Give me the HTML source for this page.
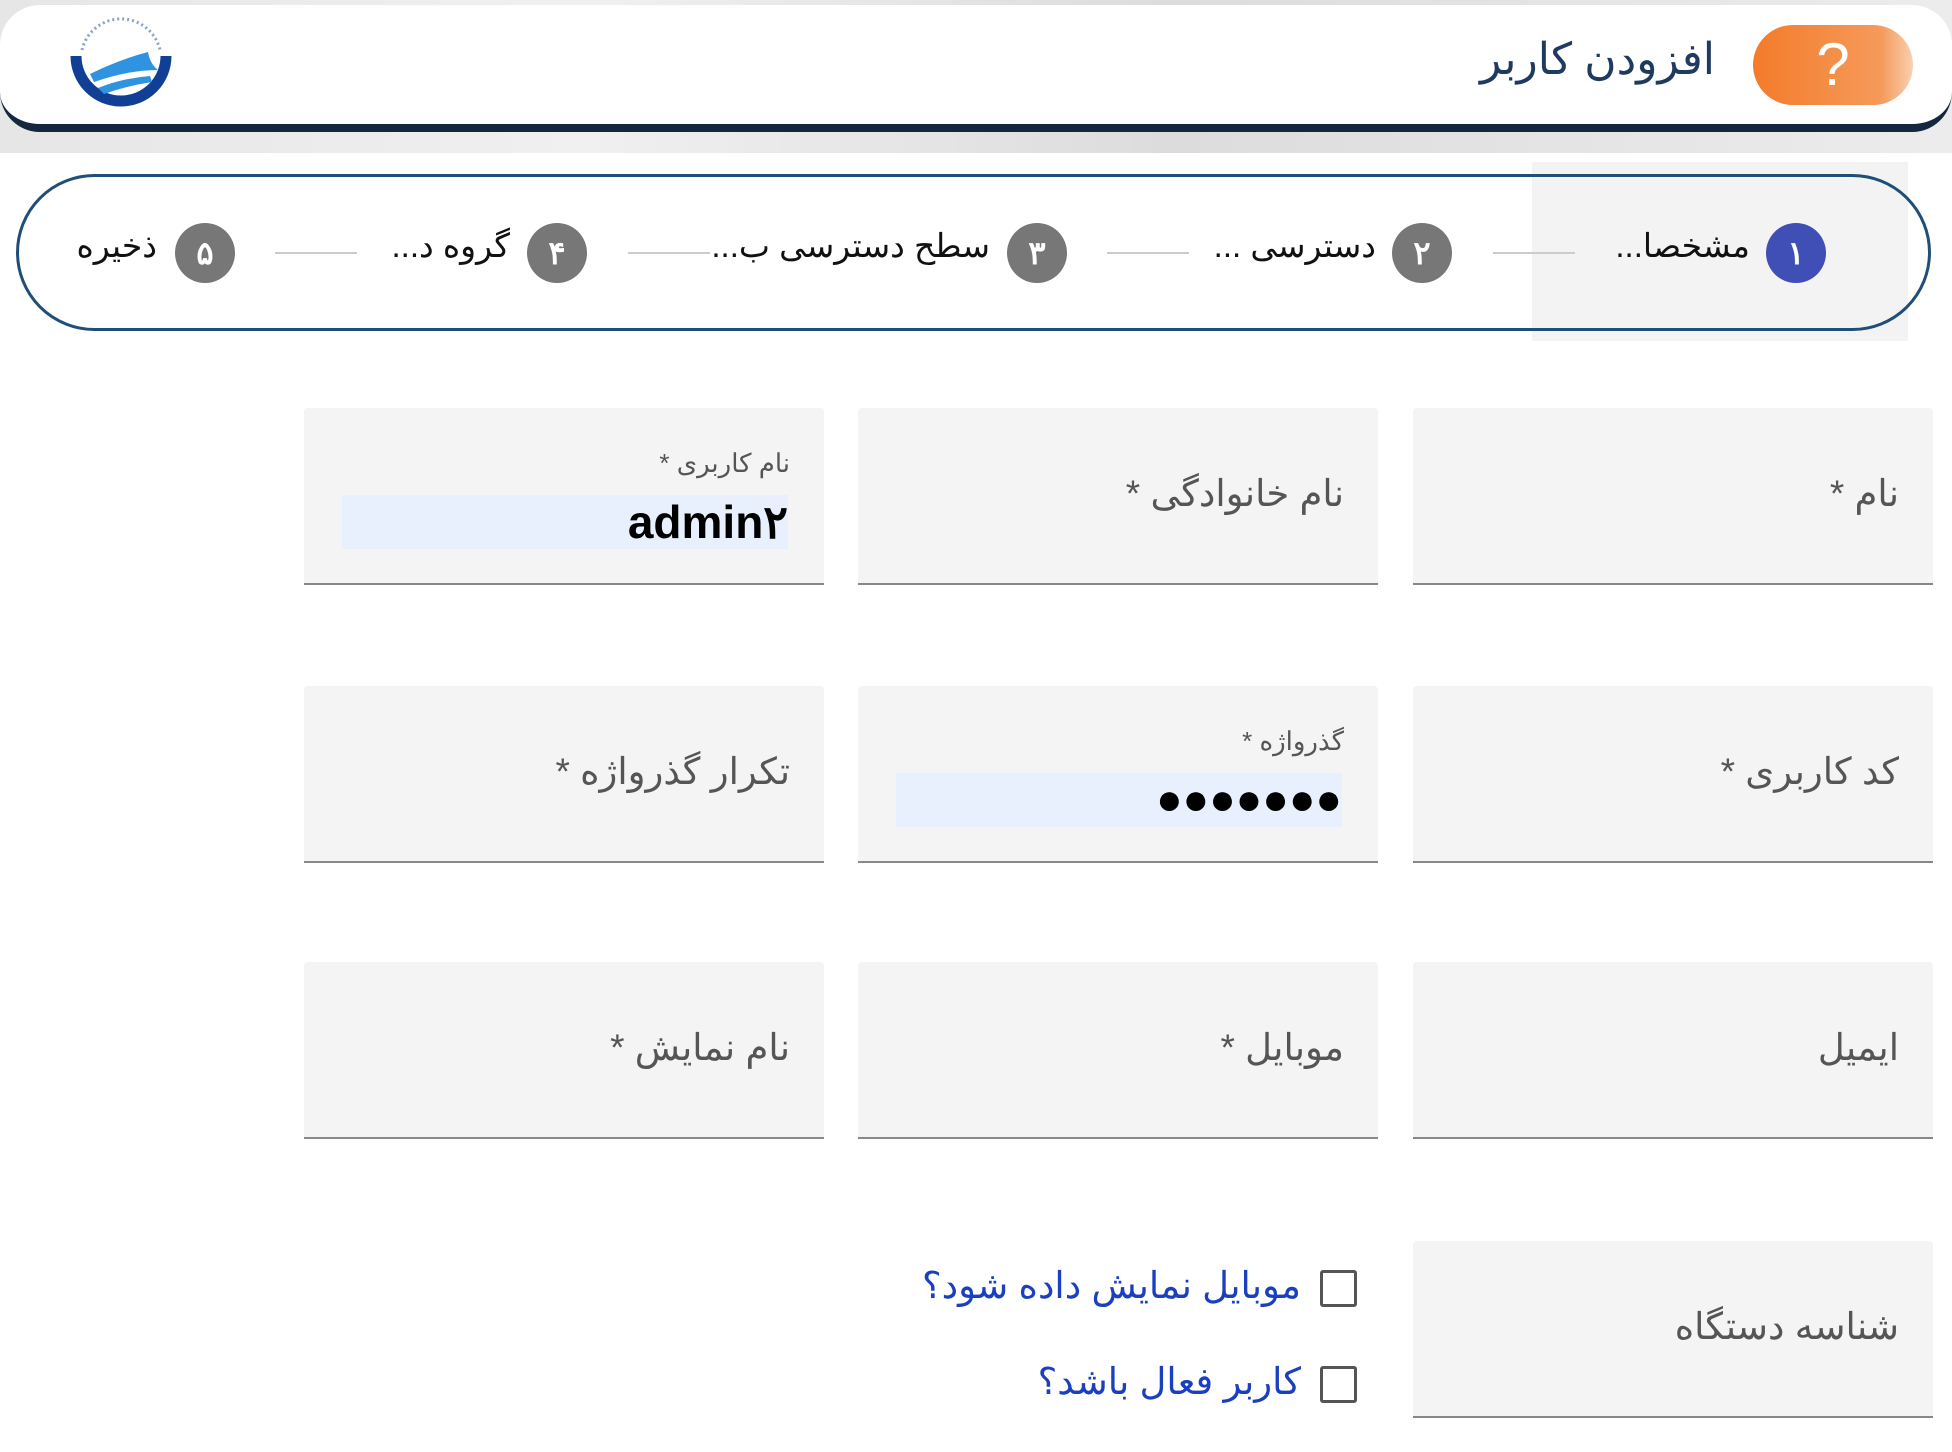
<!DOCTYPE html>
<html><head><meta charset="utf-8"><style>
*{box-sizing:border-box;margin:0;padding:0}
body{width:1952px;height:1452px;background:#fff;font-family:"Liberation Sans","Noto Sans CJK SC",sans-serif;position:relative;overflow:hidden}
.abs{position:absolute}
.band{left:0;top:0;width:1952px;height:153px;background:linear-gradient(90deg,#e6e6e6,#f0f0f0 30%,#dcdcdc 60%,#ececec)}
.hdr{left:0;top:5px;width:1952px;height:127px;background:#fff;border-radius:0 0 40px 40px;border-bottom:8px solid #14273f;border-top-left-radius:40px;border-top-right-radius:40px}
.help{left:1753px;top:25px;width:160px;height:80px;border-radius:40px;background:linear-gradient(90deg,#f47b2a,#f59a5a 80%,#f8d0b0);color:#fff;font-size:60px;text-align:center;line-height:80px}
.title{right:237px;top:34px;font-size:44px;color:#1e3a5f;direction:rtl}
.step{left:16px;top:174px;width:1915px;height:157px;border:3px solid #1f4e79;border-radius:80px}
.hl{left:1532px;top:162px;width:376px;height:179px;background:#f3f3f3}
.c{position:absolute;width:60px;height:60px;border-radius:50%;background:#777;color:#fff;font-size:32px;font-weight:bold;text-align:center;line-height:60px;top:223px}
.st{position:absolute;top:226px;font-size:33px;color:#111;direction:rtl;white-space:nowrap}
.ln{position:absolute;top:252px;height:2px;background:#ccc;width:82px}
.f{position:absolute;width:520px;height:177px;background:#f4f4f4;border-bottom:2px solid #888;border-radius:4px 4px 0 0}
.lb{position:absolute;right:34px;top:64px;font-size:37px;color:#555;direction:rtl;white-space:nowrap}
.sl{position:absolute;right:34px;top:40px;font-size:26px;color:#555;direction:rtl}
.inp{position:absolute;right:36px;top:87px;width:446px;height:54px;background:#e8f0fe;font-size:46px;font-weight:bold;text-align:right;line-height:54px;color:#000}
.cb{position:absolute;left:1320px;width:37px;height:37px;border:3px solid #555;border-radius:3px}
.ct{position:absolute;right:651px;font-size:37px;color:#1a3fbf;direction:rtl;white-space:nowrap}
</style></head><body>
<div class="abs band"></div>
<div class="abs hdr"></div>
<svg class="abs" style="left:68px;top:12px" width="106" height="100" viewBox="0 0 106 100">
<path d="M8 44 A45 45 0 1 0 98 44" fill="none" stroke="#123f96" stroke-width="11"/>
<path d="M14 38 A40 40 0 0 1 92 38" fill="none" stroke="#8aa0c8" stroke-width="3" stroke-dasharray="2 3"/>
<path d="M22 62 Q50 48 80 40 Q82 52 90 58 Q60 58 26 70Z" fill="#2e93e0"/>
<path d="M30 76 Q55 66 82 64 L84 70 Q58 74 36 82Z" fill="#2e93e0"/>
</svg>
<div class="abs help">?</div>
<div class="abs title">افزودن کاربر</div>
<div class="abs hl"></div>
<div class="abs step"></div>
<div class="c" style="left:1766px;background:#3f4fb5">۱</div>
<div class="st" style="right:202px">مشخصا...</div>
<div class="ln" style="left:1493px"></div>
<div class="c" style="left:1392px">۲</div>
<div class="st" style="right:576px">دسترسی ...</div>
<div class="ln" style="left:1107px"></div>
<div class="c" style="left:1007px">۳</div>
<div class="st" style="right:962px">سطح دسترسی ب...</div>
<div class="ln" style="left:628px"></div>
<div class="c" style="left:527px">۴</div>
<div class="st" style="right:1442px">گروه د...</div>
<div class="ln" style="left:275px"></div>
<div class="c" style="left:175px">۵</div>
<div class="st" style="right:1795px">ذخیره</div>

<div class="f" style="left:1413px;top:408px"><div class="lb">نام *</div></div>
<div class="f" style="left:858px;top:408px"><div class="lb">نام خانوادگی *</div></div>
<div class="f" style="left:304px;top:408px"><div class="sl">نام کاربری *</div><div class="inp">admin۲</div></div>

<div class="f" style="left:1413px;top:686px"><div class="lb">کد کاربری *</div></div>
<div class="f" style="left:858px;top:686px"><div class="sl">گذرواژه *</div><div class="inp" style="font-size:44px;letter-spacing:0px">●●●●●●●</div></div>
<div class="f" style="left:304px;top:686px"><div class="lb">تکرار گذرواژه *</div></div>

<div class="f" style="left:1413px;top:962px"><div class="lb">ایمیل</div></div>
<div class="f" style="left:858px;top:962px"><div class="lb">موبایل *</div></div>
<div class="f" style="left:304px;top:962px"><div class="lb">نام نمایش *</div></div>

<div class="f" style="left:1413px;top:1241px"><div class="lb">شناسه دستگاه</div></div>
<div class="cb" style="top:1270px"></div>
<div class="ct" style="top:1264px">موبایل نمایش داده شود؟</div>
<div class="cb" style="top:1366px"></div>
<div class="ct" style="top:1360px">کاربر فعال باشد؟</div>
</body></html>
